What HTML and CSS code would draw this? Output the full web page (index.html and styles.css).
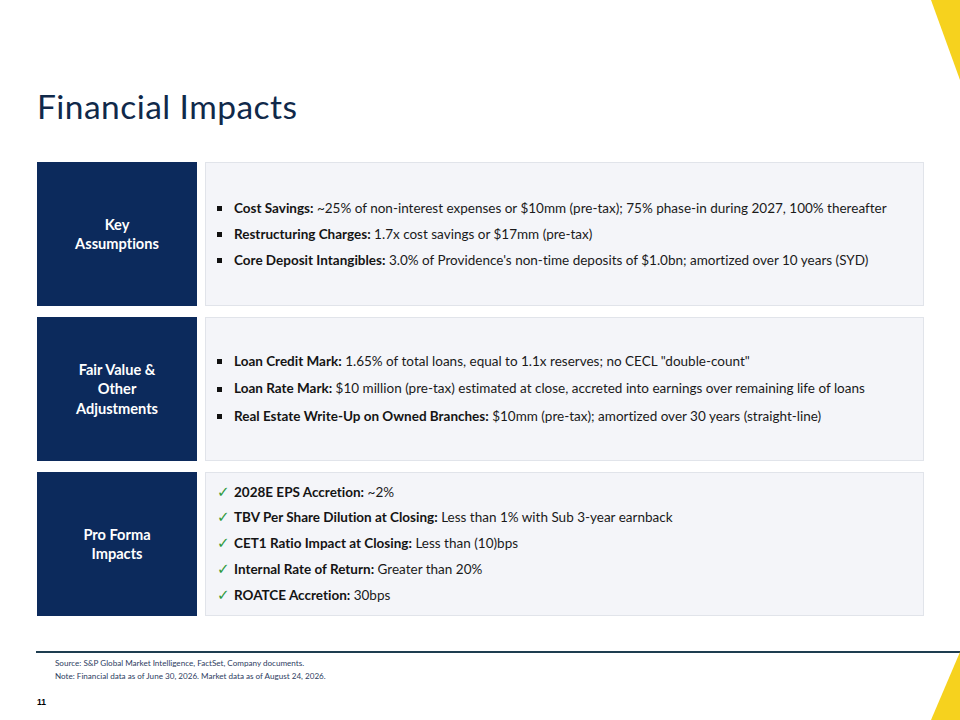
FILE: index.html
```html
<!DOCTYPE html>
<html lang="en">
<head>
<meta charset="utf-8">
<title>Financial Impacts</title>
<link rel="stylesheet" href="styles.css">
</head>
<body>
<div class="slide">
  <svg class="tri tri-top" width="29" height="80" viewBox="0 0 29 80"><polygon points="0,0 29,0 29,80" fill="#f6d21e"/></svg>
  <svg class="tri tri-bottom" width="29" height="68" viewBox="0 0 29 68"><polygon points="29,0 29,68 0,68" fill="#f6d21e"/></svg>

  <h1 class="title">Financial Impacts</h1>

  <div class="rows">
    <section class="row">
      <div class="label">Key<br>Assumptions</div>
      <div class="content">
        <ul class="list">
          <li><span class="mark square"></span><span><b>Cost Savings:</b> ~25% of non-interest expenses or $10mm (pre-tax); 75% phase-in during 2027, 100% thereafter</span></li>
          <li><span class="mark square"></span><span><b>Restructuring Charges:</b> 1.7x cost savings or $17mm (pre-tax)</span></li>
          <li><span class="mark square"></span><span><b>Core Deposit Intangibles:</b> 3.0% of Providence's non-time deposits of $1.0bn; amortized over 10 years (SYD)</span></li>
        </ul>
      </div>
    </section>

    <section class="row">
      <div class="label">Fair Value &amp;<br>Other<br>Adjustments</div>
      <div class="content">
        <ul class="list wide">
          <li><span class="mark square"></span><span><b>Loan Credit Mark:</b> 1.65% of total loans, equal to 1.1x reserves; no CECL "double-count"</span></li>
          <li><span class="mark square"></span><span><b>Loan Rate Mark:</b> $10 million (pre-tax) estimated at close, accreted into earnings over remaining life of loans</span></li>
          <li><span class="mark square"></span><span><b>Real Estate Write-Up on Owned Branches:</b> $10mm (pre-tax); amortized over 30 years (straight-line)</span></li>
        </ul>
      </div>
    </section>

    <section class="row">
      <div class="label">Pro Forma<br>Impacts</div>
      <div class="content">
        <ul class="list tight">
          <li><span class="mark check">&#10003;</span><span><b>2028E EPS Accretion:</b> ~2%</span></li>
          <li><span class="mark check">&#10003;</span><span><b>TBV Per Share Dilution at Closing:</b> Less than 1% with Sub 3-year earnback</span></li>
          <li><span class="mark check">&#10003;</span><span><b>CET1 Ratio Impact at Closing:</b> Less than (10)bps</span></li>
          <li><span class="mark check">&#10003;</span><span><b>Internal Rate of Return:</b> Greater than 20%</span></li>
          <li><span class="mark check">&#10003;</span><span><b>ROATCE Accretion:</b> 30bps</span></li>
        </ul>
      </div>
    </section>
  </div>

  <footer class="footer">
    <p class="note">Source: S&amp;P Global Market Intelligence, FactSet, Company documents.</p>
    <p class="note">Note: Financial data as of June 30, 2026. Market data as of August 24, 2026.</p>
    <p class="page">11</p>
  </footer>
</div>
</body>
</html>
```

FILE: styles.css
```css
html, body {
  margin: 0;
  padding: 0;
  background: #ffffff;
}

.slide {
  position: relative;
  width: 960px;
  height: 720px;
  overflow: hidden;
  background: #ffffff;
  font-family: "Lato", "Open Sans", sans-serif;
  font-variant-ligatures: none;
  color: #1a1a1a;
}

.tri {
  position: absolute;
  display: block;
}

.tri-top {
  top: 0;
  right: 0;
}

.tri-bottom {
  bottom: 0;
  right: 0;
}

.title {
  margin: 86px 0 0 37px;
  font-size: 33.5px;
  line-height: 40px;
  letter-spacing: 0.45px;
  font-weight: 400;
  color: #10294a;
}

.rows {
  margin: 36px 36px 0 37px;
  display: flex;
  flex-direction: column;
  gap: 11px;
}

.row {
  display: flex;
  gap: 8px;
  height: 144px;
}

.label {
  width: 160px;
  flex: none;
  background: #0c2a5c;
  color: #ffffff;
  font-weight: 700;
  font-size: 14.6px;
  line-height: 19.5px;
  display: flex;
  align-items: center;
  justify-content: center;
  text-align: center;
}

.content {
  flex: 1;
  background: #f4f5f9;
  border: 1px solid #e1e4ea;
  display: flex;
  align-items: center;
  padding-left: 11px;
}

.list {
  list-style: none;
  margin: 0;
  padding: 0;
  font-size: 13.5px;
  line-height: 26px;
}

.list.wide {
  line-height: 27.5px;
}

.list.tight {
  line-height: 25.7px;
}

.list li {
  display: flex;
  align-items: center;
  white-space: nowrap;
}

.list b {
  font-weight: 700;
  color: #141414;
}

.mark {
  width: 17px;
  flex: none;
  display: flex;
  align-items: center;
}

.mark.square::before {
  content: "";
  display: block;
  width: 5px;
  height: 5px;
  background: #111111;
}

.mark.check {
  color: #2f9a3c;
  font-family: "DejaVu Sans", sans-serif;
  font-size: 15px;
  font-weight: 700;
}

.footer {
  margin: 35px 0 0 36px;
  border-top: 2px solid #1e3d50;
  padding: 4px 0 0 19px;
}

.note {
  margin: 0;
  font-size: 8.1px;
  line-height: 13px;
  color: #2e3d62;
}

.page {
  margin: 13px 0 0 -18px;
  font-family: "Liberation Sans", Arial, sans-serif;
  font-weight: 700;
  font-size: 8.5px;
  line-height: 13px;
  color: #000000;
}
```
